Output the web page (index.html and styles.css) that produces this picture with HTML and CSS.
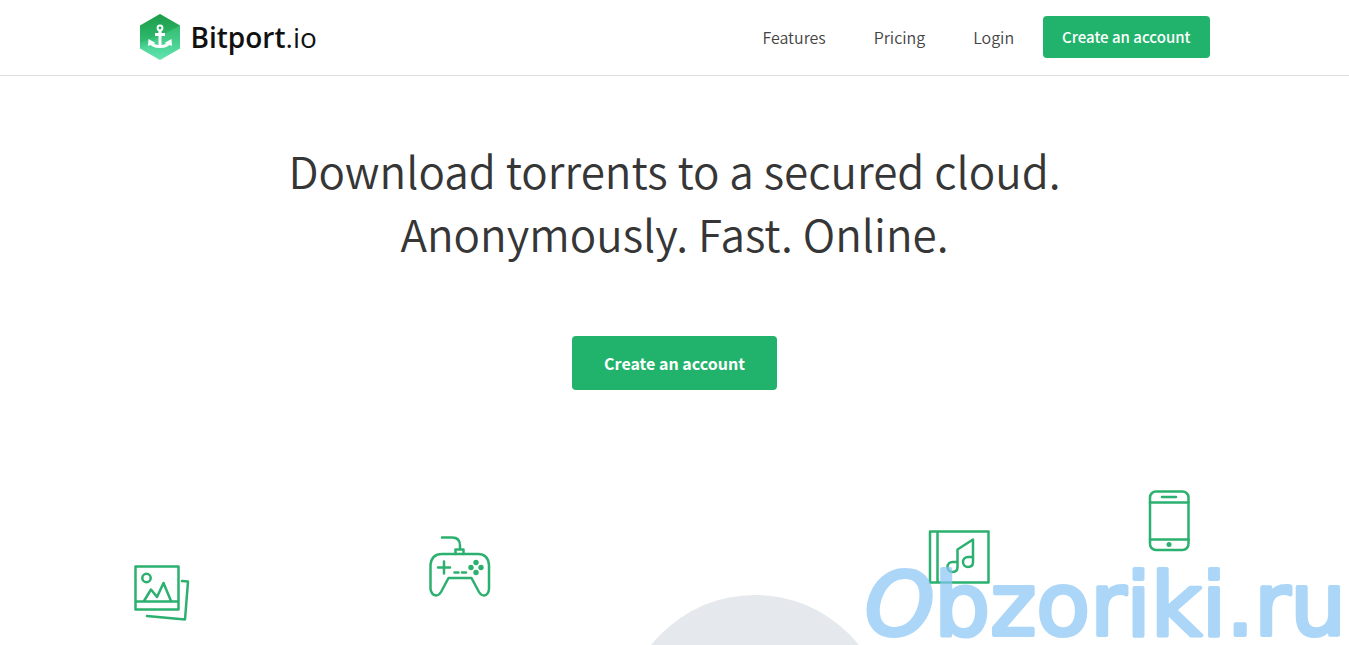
FILE: index.html
```
<!DOCTYPE html>
<html lang="en">
<head>
    <meta charset="utf-8">
    <meta name="viewport" content="width=device-width, initial-scale=1">
    <title>Bitport.io</title>
    <link rel="stylesheet" href="styles.css">
</head>
<body>
    <header class="header">
        <div class="container header-inner">
            <a href="#" class="logo">
                <svg class="logo-mark" viewBox="0 0 40 46" aria-hidden="true">
                    <defs>
                        <linearGradient id="logoGradient" x1="0" y1="0" x2="0" y2="1">
                            <stop offset="0" stop-color="#1fa04c"/>
                            <stop offset="0.5" stop-color="#35bf74"/>
                            <stop offset="1" stop-color="#5fe3b0"/>
                        </linearGradient>
                    </defs>
                    <path d="M20 0 40 11.500V34.500L20 46 0 34.500V11.500Z" fill="url(#logoGradient)"/>
                    <path d="M20 0 40 11.500 0 29V11.500Z" fill="#0f8f3c" opacity=".2"/>
                    <path d="M40 11.500V34.500L20 46 0 34.500Z" fill="#6af0c0" opacity=".2"/>
                    <g fill="none" stroke="#fff" stroke-width="3">
                        <circle cx="20" cy="14" r="2.400" stroke-width="2"/>
                        <path d="M20 16.500V32M15 20.500h10"/>
                        <path d="M10.500 27.500C11.500 31 15 32.500 20 32.500s8.500-1.500 9.500-5"/>
                    </g>
                    <path d="M8 32 8.500 25l7 4ZM32 32 31.500 25l-7 4Z" fill="#fff"/>
                </svg>
                <span class="logo-text"><strong>Bitport</strong>.io</span>
            </a>
            <nav class="nav">
                <a href="#">Features</a>
                <a href="#">Pricing</a>
                <a href="#">Login</a>
            </nav>
            <button type="button" class="btn">Create an account</button>
        </div>
    </header>

    <main class="hero">
        <h1>Download torrents to a secured cloud.<br>Anonymously. Fast. Online.</h1>
        <button type="button" class="btn btn-large">Create an account</button>

        <div class="container scene" aria-hidden="true">
            <svg class="icon icon-photos" viewBox="0 0 56 56">
                <path d="M1.500 1.500h43v43h-43ZM1.500 36.500h43M10 36l7-11.500 6 7.500 6.500-14L37 36"/>
                <circle cx="12.500" cy="13" r="4.200"/>
                <path d="M48 16l6 .5L51 54.500 13 51"/>
            </svg>
            <svg class="icon icon-gamepad" viewBox="0 0 62 62">
                <path d="M13 2.500h10q8 0 8 8V14M26.500 19v-4.500h8V19"/>
                <path d="M13 19H49Q59 19 60 30V54Q59.500 60 55 60.500 52 60.500 50 57L42.500 43H19.500L12 57Q10 60.500 7 60.500 2.500 60 1.500 54V30Q2.500 19 13 19Z"/>
                <path d="M9 32.500h12M15 26.500v12M25.500 37.500h4M33 37.500h4"/>
                <g class="solid">
                    <circle cx="47" cy="27.500" r="2.700"/>
                    <circle cx="42" cy="32.500" r="2.700"/>
                    <circle cx="52" cy="32.500" r="2.700"/>
                    <circle cx="47" cy="37.500" r="2.700"/>
                </g>
            </svg>
            <div class="circle"></div>
            <svg class="icon icon-music" viewBox="0 0 62 54">
                <path d="M2 1.500H60.500V52.500H2ZM9.500 1.500v51"/>
                <path d="M29.500 33V19.500L45 9.500v20M29.500 32h-5a5 5 0 0 0 0 10q5 0 5-5v-5M45 27h-5a5 5 0 0 0 0 10q5 0 5-5v-5"/>
            </svg>
            <svg class="icon icon-phone" viewBox="0 0 42 62">
                <rect x="2" y="1.500" width="38.500" height="58.500" rx="6"/>
                <path d="M2 12.500h38.500M2 49.500h38.500M14 7h14"/>
                <circle class="solid" cx="21" cy="54.500" r="2.500"/>
            </svg>
        </div>
    </main>

    <svg class="watermark" viewBox="0 0 484 90" role="img" aria-label="Obzoriki.ru">
        <text x="0" y="80"><tspan class="slanted">O</tspan>bzoriki.ru</text>
    </svg>
</body>
</html>
```

FILE: styles.css
```
* {
    box-sizing: border-box;
}

body {
    position: relative;
    display: flex;
    flex-direction: column;
    min-height: 100vh;
    margin: 0;
    background: #fff;
    color: #363636;
    font-family: "Noto Sans CJK SC", "Open Sans", sans-serif;
}

.container {
    width: 100%;
    max-width: 1070px;
    margin: 0 auto;
}

.header {
    border-bottom: 1px solid #ddd;
}

.header-inner {
    display: flex;
    align-items: center;
    height: 75px;
    padding-bottom: 2px;
}

.logo {
    display: flex;
    align-items: center;
    gap: 11px;
    margin-right: auto;
    color: #111;
    text-decoration: none;
}

.logo-mark {
    width: 40px;
    height: 46px;
}

.logo-text {
    font-family: "Open Sans", sans-serif;
    font-size: 28px;
    font-weight: 400;
    line-height: 40px;
}

.logo-text strong {
    font-weight: 600;
}

.nav {
    display: flex;
    gap: 48px;
    margin-right: 29px;
}

.nav a {
    color: #444;
    font-size: 16px;
    font-weight: 350;
    line-height: 24px;
    text-decoration: none;
}

.btn {
    height: 42px;
    padding: 0 19px;
    border: 0;
    border-radius: 4px;
    background: #21b36b;
    color: #fff;
    font-family: inherit;
    font-size: 15px;
    font-weight: 500;
    line-height: 24px;
    cursor: pointer;
}

.btn:hover {
    background: #1c9f5e;
}

.btn-large {
    height: 54px;
    padding: 0 32px;
    font-size: 16px;
    font-weight: 700;
}

.hero {
    display: flex;
    flex: 1;
    flex-direction: column;
    align-items: center;
    padding-top: 63px;
    overflow: hidden;
}

h1 {
    margin: 0 0 71px;
    font-size: 44px;
    font-weight: 350;
    line-height: 63px;
    text-align: center;
}

/* Drifting icons, the circle runs off the bottom edge */
.scene {
    position: relative;
    flex: 1;
    min-height: 255px;
}

.icon {
    position: absolute;
    fill: none;
    stroke: #2bb06f;
    stroke-width: 2.5;
    stroke-linecap: round;
    stroke-linejoin: round;
}

.icon .solid {
    fill: #2bb06f;
    stroke: none;
}

.icon-photos {
    top: 175px;
    left: -6px;
    width: 56px;
}

.icon-gamepad {
    top: 145px;
    left: 289px;
    width: 62px;
}

.icon-music {
    top: 140px;
    right: 220px;
    width: 62px;
}

.icon-phone {
    top: 100px;
    right: 20px;
    width: 42px;
}

.circle {
    position: absolute;
    top: 205px;
    left: 482px;
    width: 266px;
    height: 266px;
    border-radius: 50%;
    background: #e5e8ed;
}

.watermark {
    position: absolute;
    right: 0;
    bottom: 0;
    width: 484px;
    opacity: 0.7;
    fill: #8ac6f6;
    stroke: #8ac6f6;
    stroke-width: 4;
    stroke-linejoin: round;
    font-family: "DejaVu Sans", sans-serif;
    font-size: 88px;
}

.watermark .slanted {
    font-style: oblique;
}
```
